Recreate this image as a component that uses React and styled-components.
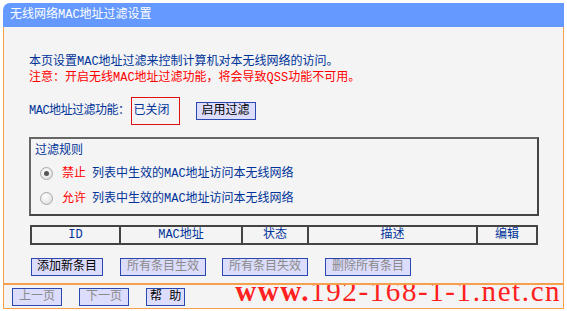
import React from 'react';
import styled, { createGlobalStyle } from 'styled-components';

const Global = createGlobalStyle`
  body {
    margin: 0;
    background: #fff;
    font-family: "Liberation Mono", "Noto Sans CJK SC", monospace;
    font-size: 12px;
    line-height: 16px;
  }
`;

const Panel = styled.div`
  margin: 3px 0 0 3px;
  width: 561px;
`;

const Header = styled.div`
  height: 24px;
  background: #6699ff;
  border-top-left-radius: 7px;
  color: #fff;
  line-height: 24px;
  padding-left: 7px;
`;

const Body = styled.div`
  background: #f4f4f4;
  border-left: 1px solid #f6a04d;
  border-right: 1px solid #f6a04d;
  padding: 27px 0 0 25px;
  height: 256px;
  box-sizing: border-box;
`;

const Line = styled.div`
  color: ${p => (p.$red ? '#ff0000' : '#003399')};
  height: 16px;
`;

const StatusRow = styled.div`
  display: flex;
  align-items: center;
  margin-top: 11px;
  color: #003399;
  height: 28px;
`;

const Label = styled.span`
  letter-spacing: -0.5px;
`;

const Off = styled.span`
  border: 1px solid #e01010;
  height: 26px;
  width: 45px;
  display: flex;
  align-items: center;
  padding-left: 2px;
  margin-left: 1px;
`;

const Btn = styled.button`
  font-family: inherit;
  font-size: 12px;
  height: 18px;
  box-sizing: border-box;
  padding: 0 ${p => p.$pad ?? 6}px;
  background: #dcdcfc;
  border: 1px solid #2a48b0;
  color: ${p => (p.$off ? '#8a8a8a' : '#000')};
  line-height: 16px;
  margin: 0 0 0 ${p => p.$ml || 0}px;
  white-space: nowrap;
  cursor: pointer;
`;

const Rules = styled.div`
  margin-top: 12px;
  width: 510px;
  height: 79px;
  border: 2px solid #555;
  border-color: #666 #444 #444 #666;
  padding: 4px 0 0 4px;
  box-sizing: border-box;
  color: #003399;
`;

const RuleTitle = styled.div`
  height: 16px;
  margin-bottom: 2px;
`;

const RuleRow = styled.label`
  display: flex;
  align-items: center;
  height: 25px;
  padding-left: 5px;
`;

const Radio = styled.span`
  width: 11px;
  height: 11px;
  border-radius: 50%;
  border: 1px solid #a8a8a8;
  background: radial-gradient(circle at 40% 35%, #fff, #d8d8d8);
  display: inline-flex;
  align-items: center;
  justify-content: center;
  margin-right: 9px;
  &::after {
    content: '';
    width: 5px;
    height: 5px;
    border-radius: 50%;
    background: ${p => (p.$on ? '#555' : 'transparent')};
  }
`;

const Red = styled.span`
  color: #ff0000;
  margin-right: 6px;
`;

const Table = styled.table`
  margin: 9px 0 0 1px;
  width: 508px;
  table-layout: fixed;
  border-collapse: collapse;
  border: 2px solid #444;
  td {
    border: 2px solid #444;
    border-width: 0 2px;
    height: 16px;
    padding: 0;
    text-align: center;
    color: #003399;
  }
`;

const BtnRow = styled.div`
  display: flex;
  margin-top: 13px;
  padding-left: 2px;
`;

const Footer = styled.div`
  background: #f4f4f4;
  border: 1px solid #f6a04d;
  border-top: 2px solid #f6a04d;
  height: 23px;
  display: flex;
  align-items: center;
  padding-left: 8px;
  overflow: hidden;
  white-space: nowrap;
`;

const Mark = styled.div`
  align-self: flex-start;
  margin: -6px 0 0 50px;
  font-family: "Liberation Serif", serif;
  font-size: 29px;
  color: #ff2020;
  letter-spacing: 1.6px;
  line-height: 24px;
  b {
    font-weight: bold;
  }
`;

export default function App() {
  return (
    <>
      <Global />
      <Panel>
        <Header>无线网络MAC地址过滤设置</Header>
        <Body>
          <Line>本页设置MAC地址过滤来控制计算机对本无线网络的访问。</Line>
          <Line $red>注意：开启无线MAC地址过滤功能，将会导致QSS功能不可用。</Line>
          <StatusRow>
            <Label>MAC地址过滤功能：</Label>
            <Off>已关闭</Off>
            <Btn $pad={5} $ml={16}>启用过滤</Btn>
          </StatusRow>
          <Rules>
            <RuleTitle>过滤规则</RuleTitle>
            <RuleRow>
              <Radio $on />
              <Red>禁止</Red>列表中生效的MAC地址访问本无线网络
            </RuleRow>
            <RuleRow>
              <Radio />
              <Red>允许</Red>列表中生效的MAC地址访问本无线网络
            </RuleRow>
          </Rules>
          <Table>
            <colgroup>
              <col style={{ width: 89 }} />
              <col style={{ width: 122 }} />
              <col style={{ width: 66 }} />
              <col style={{ width: 169 }} />
              <col />
            </colgroup>
            <tbody>
              <tr>
                <td>ID</td>
                <td>MAC地址</td>
                <td>状态</td>
                <td>描述</td>
                <td>编辑</td>
              </tr>
            </tbody>
          </Table>
          <BtnRow>
            <Btn $pad={5}>添加新条目</Btn>
            <Btn $off $ml={17}>所有条目生效</Btn>
            <Btn $off $ml={16}>所有条目失效</Btn>
            <Btn $off $ml={17}>删除所有条目</Btn>
          </BtnRow>
        </Body>
        <Footer>
          <Btn $off $pad={6}>上一页</Btn>
          <Btn $off $pad={6} $ml={17}>下一页</Btn>
          <Btn $pad={3} $ml={17}>帮 助</Btn>
          <Mark><b>www.</b>192-168-1-1.net.cn</Mark>
        </Footer>
      </Panel>
    </>
  );
}
